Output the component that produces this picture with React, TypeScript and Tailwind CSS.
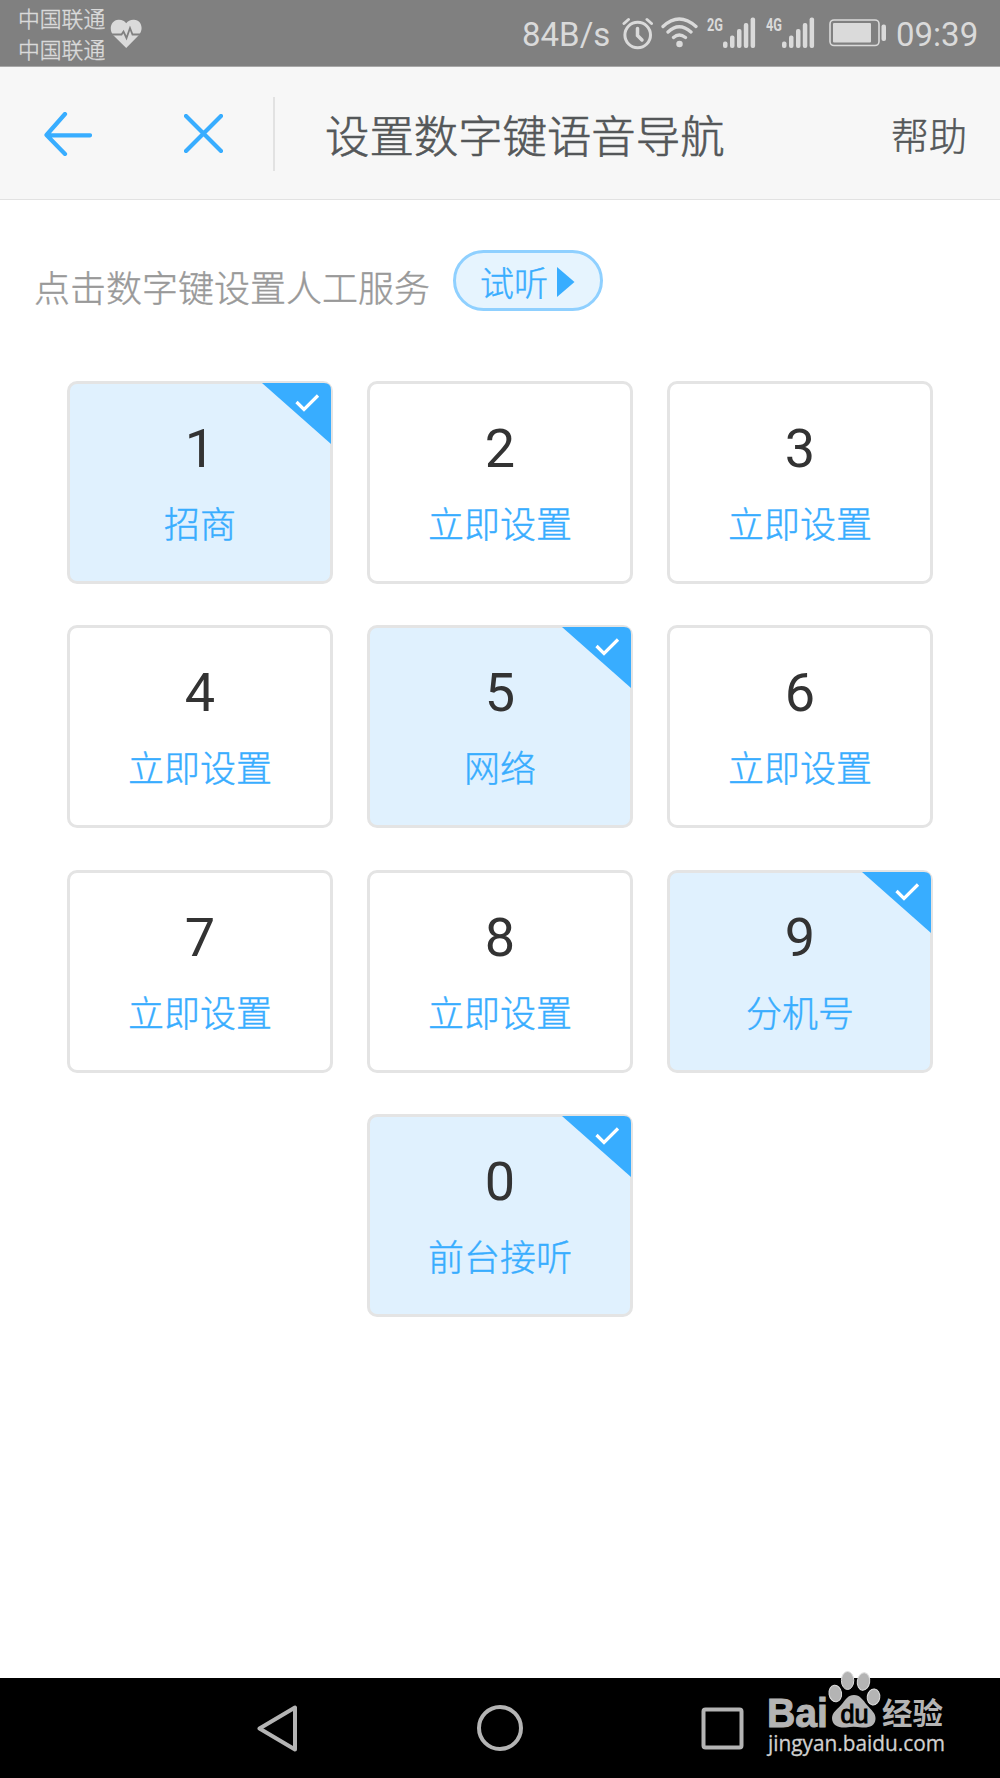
import React from "react";

type Key = { digit: string; label?: string };

const rows: Key[][] = [
  [{ digit: "1", label: "招商" }, { digit: "2" }, { digit: "3" }],
  [{ digit: "4" }, { digit: "5", label: "网络" }, { digit: "6" }],
  [{ digit: "7" }, { digit: "8" }, { digit: "9", label: "分机号" }],
  [{ digit: "0", label: "前台接听" }],
];

function KeyCard({ digit, label }: Key) {
  return (
    <button
      className={
        "relative flex h-[203px] w-[266px] flex-col items-center rounded-[10px] border-[3px] border-[#e4e4e4] " +
        (label ? "bg-[#e0f1fe]" : "bg-white")
      }
    >
      <span className="mt-[37px] font-['Roboto'] text-[54px] leading-[56px] font-normal text-[#333333] [-webkit-text-stroke:0]">{digit}</span>
      <span className="mt-[27px] text-[36px] leading-[36px] text-[#38adff]">{label ?? "立即设置"}</span>
      {label && (
        <svg className="absolute -top-px -right-px" width="69" height="61" viewBox="0 0 69 61">
          <path d="M0 0H62Q69 0 69 7V61Z" fill="#38adff" />
          <path d="M34.500 19L42 26.500L56 12.500" fill="none" stroke="#fff" strokeWidth="3.200" />
        </svg>
      )}
    </button>
  );
}

function Signal({ kind }: { kind: string }) {
  return (
    <svg className="[-webkit-text-stroke:0]" width="52" height="37" viewBox="-2 -3 52 37" fill="#dadada">
      <text x="0" y="14.500" fontSize="17.500" fontWeight="700" fontFamily="Roboto" textLength="16" lengthAdjust="spacingAndGlyphs">
        {kind}
      </text>
      <rect x="16" y="25.500" width="4.500" height="6.500" rx="2" />
      <rect x="23" y="19.500" width="4.500" height="12.500" rx="2" />
      <rect x="30" y="13" width="4.500" height="19" rx="2" />
      <rect x="36.800" y="7" width="4.500" height="25" rx="2" />
      <rect x="43.600" y="1.500" width="4.500" height="30.500" rx="2" />
    </svg>
  );
}

function StatusBar() {
  return (
    <div className="flex h-[67px] items-start border-b border-[#a8a8a8] bg-[#808080] text-[#dadada]">
      <div className="mt-[3px] ml-[18px] w-[88px] text-[21.8px] leading-[30.5px] whitespace-nowrap">
        <div>中国联通</div>
        <div>中国联通</div>
      </div>
      <svg className="mt-[19px] ml-[4px]" width="33" height="30" viewBox="0 0 33 30">
        <path
          d="M16.200 29L3 16C-1.500 10 1 1 8.500 .700C12 .500 14.500 2 16.200 4.200C18 2 20.500 .500 24 .700C31.500 1 34 10 29 16Z"
          fill="#dadada"
        />
        <path d="M0 15.500H11.500L13.500 12.500L16.500 19L20 9L22.500 15.500H33" fill="none" stroke="#808080" strokeWidth="1.800" />
      </svg>
      <div className="mt-[16px] ml-[379px] w-[88px] font-['Roboto'] text-[33px] leading-[38px] font-normal whitespace-nowrap [-webkit-text-stroke:0]">84B/s</div>
      <svg className="mt-[17px] ml-[12px]" width="33" height="33" viewBox="0 0 33 33" fill="none" stroke="#dadada" strokeLinecap="round">
        <circle cx="15.700" cy="18" r="12.800" strokeWidth="3" />
        <path d="M15.500 11.500V18.500L20 23" strokeWidth="3.500" />
        <path d="M2 6.500L6.500 2.500M29.500 6.500L25 2.500" strokeWidth="3" />
      </svg>
      <svg className="mt-[17px] ml-[6px]" width="37" height="31" viewBox="0 0 37 31" fill="none" stroke="#dadada" strokeWidth="3.300" strokeLinecap="round">
        <path d="M2 9.500Q18 -5.500 35 9.500M7 15Q18 4.500 30 15M12.500 20.500Q18 15.500 24.500 20.500" />
        <circle cx="18.500" cy="27" r="1.600" />
      </svg>
      <div className="mt-[13px] ml-[7px] flex gap-[7px]">
        <Signal kind="2G" />
        <Signal kind="4G" />
      </div>
      <svg className="mt-[19px] ml-[13px]" width="58" height="28" viewBox="0 0 58 28">
        <rect x="1" y="1" width="49" height="25.500" rx="4" fill="none" stroke="#dadada" strokeWidth="1.600" />
        <rect x="4" y="4" width="38" height="19.500" rx="1" fill="#dadada" />
        <rect x="52.500" y="5.500" width="4.500" height="16.500" rx="2" fill="#dadada" />
      </svg>
      <div className="mt-[16px] ml-[9px] font-['Roboto'] text-[33px] leading-[38px] font-normal [-webkit-text-stroke:0]">09:39</div>
    </div>
  );
}

function Header() {
  return (
    <header className="flex h-[133px] items-center border-b border-[#e2e2e2] bg-[#f7f7f7] text-[#545759]">
      <svg className="mt-[2px] ml-[44px]" width="48" height="44" viewBox="0 0 48 44" fill="none" stroke="#38adff" strokeWidth="4.200" strokeLinecap="round" strokeLinejoin="round">
        <path d="M21 2L2.500 23L21 42M3 23.300H46" />
      </svg>
      <svg className="mt-[1px] ml-[92px]" width="39" height="39" viewBox="0 0 39 39" fill="none" stroke="#38adff" strokeWidth="4.200" strokeLinecap="round">
        <path d="M2 2L37 37M37 2L2 37" />
      </svg>
      <div className="mt-[1px] ml-[50px] h-[74px] w-[2px] bg-[#e2e2e2]" />
      <h1 className="mt-[2px] ml-[50px] w-[420px] text-[44.400px] leading-[44px] whitespace-nowrap [-webkit-text-stroke:0.6px_#545759]">设置数字键语音导航</h1>
      <button className="mt-[1px] ml-[146px] text-[38px] leading-[38px] whitespace-nowrap [-webkit-text-stroke:0.5px_#545759]">帮助</button>
    </header>
  );
}

function Watermark() {
  return (
    <svg className="absolute right-[48px] bottom-[12px] [-webkit-text-stroke:0]" width="190" height="98" viewBox="762 1668 190 98" fill="#b4b4b4">
      <text x="767" y="1726.500" fontSize="40" fontWeight="700" fontFamily="Liberation Sans" stroke="#b4b4b4" strokeWidth="1" textLength="61" lengthAdjust="spacingAndGlyphs">
        Bai
      </text>
      <g stroke="#dedede" strokeWidth="1">
        <ellipse cx="835.300" cy="1693.500" rx="6.300" ry="8.300" transform="rotate(-8 835.300 1693.500)" />
        <ellipse cx="847.600" cy="1680.500" rx="6.200" ry="9" />
        <ellipse cx="863.500" cy="1681.500" rx="6.200" ry="8.800" transform="rotate(8 863.500 1681.500)" />
        <ellipse cx="873.500" cy="1697" rx="6.300" ry="8" transform="rotate(8 873.500 1697)" />
      </g>
      <path d="M854 1695C860 1695 863 1700 867 1705C871 1710 876 1713 875.500 1719C875 1726 869 1728 862 1727.500C856 1726.500 851 1726.500 846 1727.500C838 1728 832 1725 832 1718C832 1712 838 1709 842 1704C846 1699 848 1695 854 1695Z" />
      <text x="840.500" y="1723" fontSize="25" fontWeight="400" fontFamily="Liberation Sans" fill="#000" stroke="#000" strokeWidth="1" textLength="28" lengthAdjust="spacingAndGlyphs">
        du
      </text>
      <text x="882" y="1724" fontSize="30" fontWeight="700" fontFamily="'Noto Sans CJK SC'" textLength="61" lengthAdjust="spacingAndGlyphs">
        经验
      </text>
      <text x="768" y="1750.500" fontSize="21.500" fontWeight="400" fontFamily="'Open Sans'" fill="#d0d0d0" stroke="#d0d0d0" strokeWidth="0.300" textLength="177" lengthAdjust="spacingAndGlyphs">
        jingyan.baidu.com
      </text>
    </svg>
  );
}

export default function App() {
  return (
    <div className="relative flex h-[1778px] w-[1000px] flex-col overflow-hidden bg-white font-['Noto_Sans_CJK_SC',sans-serif] font-light [-webkit-text-stroke:0.4px_currentColor]">
      <StatusBar />
      <Header />
      <main className="flex-1">
        <div className="flex items-start">
          <p className="mt-[68px] ml-[34px] w-[419px] text-[36px] leading-[36px] whitespace-nowrap text-[#999999]">点击数字键设置人工服务</p>
          <button className="mt-[50px] flex h-[61px] w-[150px] items-center rounded-full border-[3px] border-[#8fd0ff] bg-[#e6f4fe] pb-[1px] pl-[24px] text-[34px] leading-[34px] text-[#38adff]">
            <span className="mt-[4px]">试听</span>
            <svg className="mt-[4px] ml-[9px]" width="18" height="30" viewBox="0 0 18 30">
              <path d="M0 0L17.500 15L0 30Z" fill="#38adff" />
            </svg>
          </button>
        </div>
        <div className="mt-[70px] flex flex-col gap-[41.400px]">
          {rows.map((row) => (
            <div key={row[0].digit} className="flex justify-center gap-[34px]">
              {row.map((k) => (
                <KeyCard key={k.digit} {...k} />
              ))}
            </div>
          ))}
        </div>
      </main>
      <nav className="flex h-[100px] items-center bg-black">
        <svg className="ml-[257px]" width="41" height="47" viewBox="0 0 41 47" fill="none" stroke="#b4b4b4" strokeWidth="4" strokeLinejoin="round">
          <path d="M2.500 23.500L38 2.500V44.500Z" />
        </svg>
        <svg className="ml-[179px]" width="46" height="46" viewBox="0 0 46 46" fill="none" stroke="#b4b4b4" strokeWidth="4">
          <circle cx="23" cy="23" r="21" />
        </svg>
        <svg className="ml-[178px]" width="43" height="43" viewBox="0 0 43 43" fill="none" stroke="#b4b4b4" strokeWidth="4">
          <rect x="2.500" y="2.500" width="38" height="38" rx="2" />
        </svg>
      </nav>
      <Watermark />
    </div>
  );
}
